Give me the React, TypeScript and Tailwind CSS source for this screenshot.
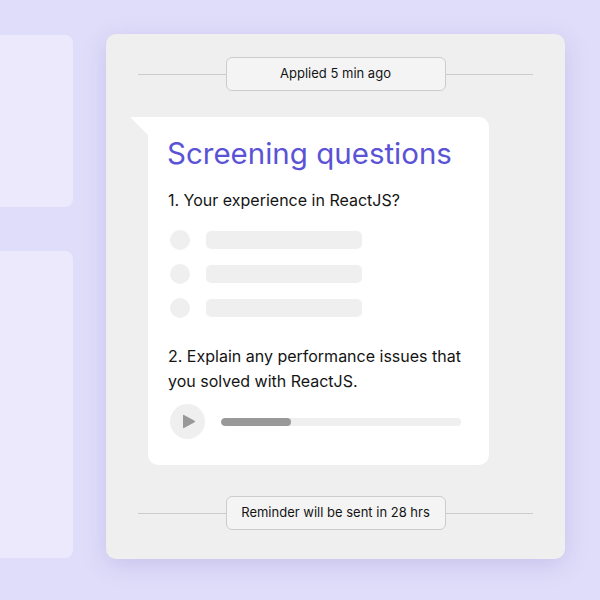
import React from 'react';

const Pill = ({ label }: { label: string }) => (
    <div className="flex items-center">
        <div className="flex-1 h-px bg-[#cccccc]" />
        <div className="w-[220px] h-[34px] flex items-center justify-center rounded-[6px] border border-[#cccccc] bg-[#f4f4f4] text-[13px] text-[#141414]">
            {label}
        </div>
        <div className="flex-1 h-px bg-[#cccccc]" />
    </div>
);

const OptionRow = () => (
    <div className="flex items-center gap-4 ml-[2px]">
        <div className="w-5 h-5 rounded-full bg-[#efefef]" />
        <div className="w-[156px] h-[18px] rounded-[5px] bg-[#efefef]" />
    </div>
);

const App = () => {
    return (
        <div
            className="w-[600px] h-[600px] overflow-hidden flex pt-[34px] bg-[#e0ddfa]"
            style={{ fontFamily: 'Inter, "Noto Sans", sans-serif' }}
        >
            {/* Side cards, cut by the left edge */}
            <div className="w-[73px] shrink-0 flex flex-col gap-[44px] pt-px overflow-hidden">
                <div className="-ml-5 h-[172px] rounded-[8px] bg-[#ebe9fb]" />
                <div className="-ml-5 h-[307px] rounded-[8px] bg-[#ebe9fb]" />
            </div>

            {/* Main panel */}
            <div className="ml-[33px] w-[459px] h-[525px] shrink-0 rounded-[10px] bg-[#efefef] shadow-[0_6px_24px_rgba(90,80,170,0.18)] px-8 pt-[23px] flex flex-col">
                <Pill label="Applied 5 min ago" />

                {/* Chat bubble */}
                <div className="relative mt-[26px] ml-[10px] w-[341px] h-[348px] bg-white rounded-[10px] rounded-tl-none pl-5 pr-[19px] pt-[18px]">
                    <svg className="absolute -left-[18px] top-0" width="18" height="18" viewBox="0 0 18 18">
                        <path d="M0 0 L18 0 L18 18 Z" fill="#ffffff" />
                    </svg>
                    <h1 className="-ml-px text-[29.5px] leading-[36px] font-normal text-[#5a53d6]">
                        Screening questions
                    </h1>
                    <p className="mt-[17px] text-[16px] leading-6 text-[#141414]">1. Your experience in ReactJS?</p>

                    <div className="mt-[18px] flex flex-col gap-[14px]">
                        <OptionRow />
                        <OptionRow />
                        <OptionRow />
                    </div>

                    <p className="mt-[26px] text-[16px] leading-[25px] text-[#141414]">
                        2. Explain any performance issues that you solved with ReactJS.
                    </p>

                    {/* Audio player */}
                    <div className="mt-[10px] ml-[2px] flex items-center gap-4">
                        <div className="w-[35px] h-[35px] rounded-full bg-[#efefef] flex items-center justify-center">
                            <svg width="14" height="15" viewBox="0 0 14 15" className="ml-[3px]">
                                <path d="M1 1.5 Q1 0.3 2 0.9 L12.6 6.8 Q13.5 7.5 12.6 8.2 L2 14.1 Q1 14.7 1 13.5 Z" fill="#999999" />
                            </svg>
                        </div>
                        <div className="w-[240px] h-2 rounded-full bg-[#efefef] overflow-hidden">
                            <div className="w-[70px] h-2 rounded-full bg-[#999999]" />
                        </div>
                    </div>
                </div>

                <div className="mt-[31px]">
                    <Pill label="Reminder will be sent in 28 hrs" />
                </div>
            </div>
        </div>
    );
};

export default App;
